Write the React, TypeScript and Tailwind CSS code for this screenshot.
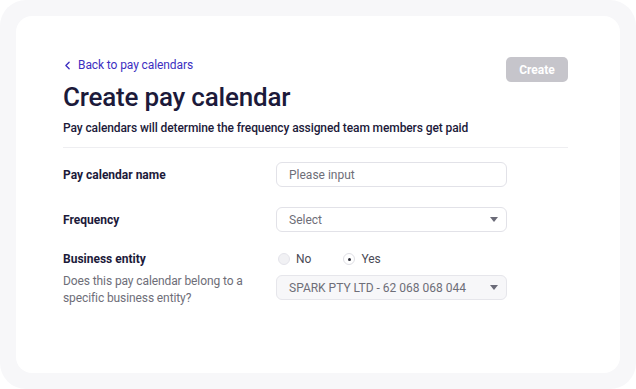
import { ChevronLeft } from "lucide-react";

function Caret() {
  return (
    <svg width="8" height="5" viewBox="0 0 8 5" className="shrink-0">
      <path d="M0 0h8L4 5z" fill="#6b6b78" />
    </svg>
  );
}

export default function App() {
  return (
    <div
      className="w-[636px] h-[389px] bg-white"
      style={{ fontFamily: "Roboto, 'Liberation Sans', sans-serif" }}
    >
      <div className="h-full rounded-[26px] bg-[#f7f7f9] p-4">
        <div className="h-full rounded-2xl bg-white pl-[47px] pr-[52px] pt-[40px]">
          <div className="flex items-start justify-between">
            <div>
              <div className="flex items-center gap-[4px] text-[12px] tracking-[-0.1px] text-[#3d2fc1]">
                <ChevronLeft size={13} strokeWidth={2.5} className="-ml-[2px]" />
                <span>Back to pay calendars</span>
              </div>
              <h1 className="mt-[8px] text-[26px] leading-[30px] font-medium tracking-[-0.2px] text-[#1c1a3a]">
                Create pay calendar
              </h1>
              <p className="mt-[8px] text-[12px] leading-[16px] font-medium tracking-[-0.1px] text-[#1c1a3a]">
                Pay calendars will determine the frequency assigned team members get paid
              </p>
            </div>
            <button className="mt-[1px] h-[25px] w-[62px] rounded-[5px] bg-[#c6c5cb] text-[12px] font-bold text-white">
              Create
            </button>
          </div>

          <div className="mt-[11px] h-px bg-[#eeeef1]" />

          <div className="mt-[14px] flex items-center">
            <div className="w-[213px] text-[12px] font-bold text-[#1c1a3a]">
              Pay calendar name
            </div>
            <div className="flex h-[25px] w-[231px] items-center rounded-[6px] border border-[#e2e2e8] px-[12px] text-[12px] text-[#6e6e78]">
              Please input
            </div>
          </div>

          <div className="mt-[20px] flex items-center">
            <div className="w-[213px] text-[12px] font-bold text-[#1c1a3a]">Frequency</div>
            <div className="flex h-[25px] w-[231px] items-center justify-between rounded-[6px] border border-[#e2e2e8] pl-[12px] pr-[8px] text-[12px] text-[#6e6e78]">
              <span>Select</span>
              <Caret />
            </div>
          </div>

          <div className="mt-[19px] flex items-start">
            <div className="w-[213px]">
              <div className="text-[12px] leading-[16px] font-bold text-[#1c1a3a]">
                Business entity
              </div>
              <div className="mt-[6px] w-[200px] text-[12px] leading-[17px] tracking-[-0.1px] text-[#6e6e78]">
                Does this pay calendar belong to a specific business entity?
              </div>
            </div>
            <div className="w-[231px]">
              <div className="flex h-[16px] items-center text-[12px] text-[#4b4b56]">
                <div className="ml-[2px] flex items-center gap-[6px]">
                  <span className="h-[12px] w-[12px] rounded-full border border-[#e4e4ea] bg-[#f1f1f4]" />
                  <span>No</span>
                </div>
                <div className="ml-[32px] flex items-center gap-[6px]">
                  <span className="flex h-[12px] w-[12px] items-center justify-center rounded-full border border-[#dedee4] bg-white">
                    <span className="h-[3px] w-[3px] rounded-full bg-[#2a2a35]" />
                  </span>
                  <span>Yes</span>
                </div>
              </div>
              <div className="mt-[8px] flex h-[25px] items-center justify-between rounded-[6px] border border-[#e6e6eb] bg-[#f7f7f9] pl-[12px] pr-[8px] text-[12px] text-[#6e6e78]">
                <span>SPARK PTY LTD - 62 068 068 044</span>
                <Caret />
              </div>
            </div>
          </div>
        </div>
      </div>
    </div>
  );
}
